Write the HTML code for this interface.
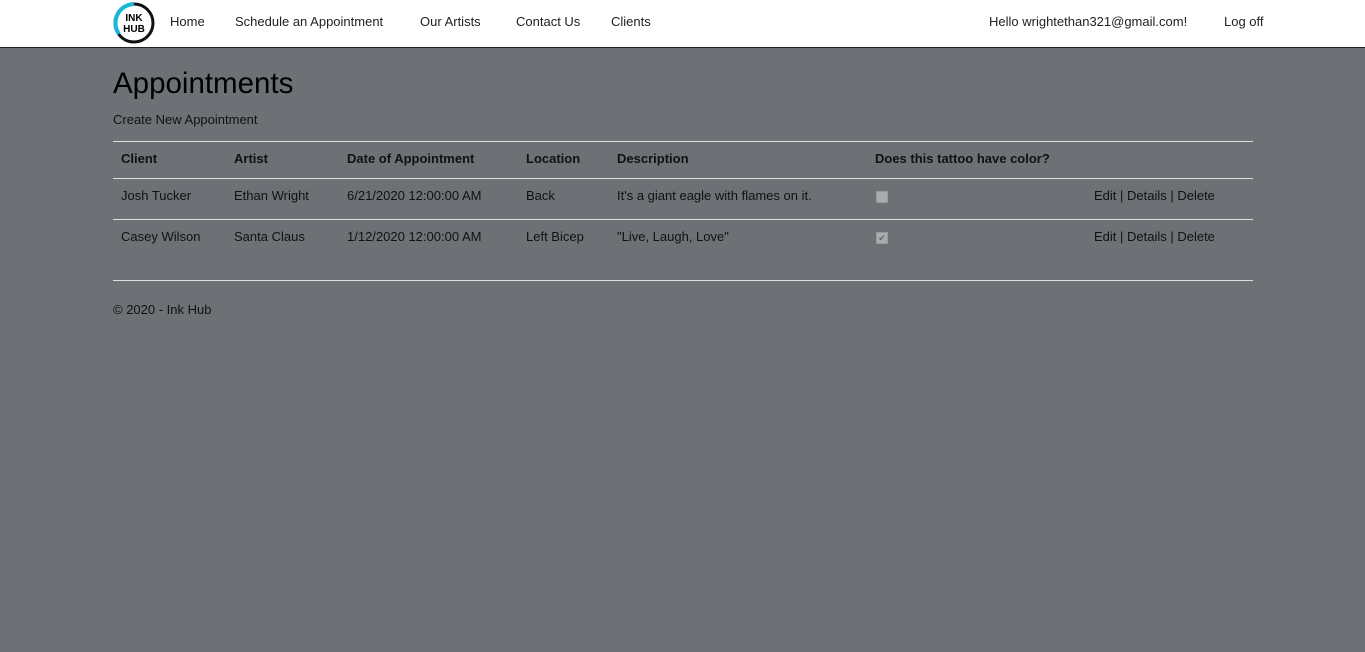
<!DOCTYPE html>
<html><head><meta charset="utf-8"><style>
body{margin:0;background:#6d7075;font-family:"Liberation Sans",sans-serif;font-size:13px;color:#111;width:1365px;height:652px;overflow:hidden}
.nav{position:absolute;top:0;left:0;width:1365px;height:47px;background:#fff;border-bottom:1px solid #222}
.nav span{position:absolute;top:14px;font-size:13px;color:#222}
.logo{position:absolute;left:113px;top:2px;width:42px;height:42px}
h1{position:absolute;left:113px;top:67px;margin:0;font-weight:normal;font-size:29.5px;color:#000}
.t{position:absolute;font-size:13px;white-space:nowrap}
.line{position:absolute;left:113px;width:1140px;height:1px;background:#ddd}
.b{font-weight:bold}
.cb{position:absolute;width:10px;height:10px;background:#a9abae;border:1px solid #999;left:876px}
</style></head><body>
<div class="nav">
<svg class="logo" viewBox="0 0 42 42"><circle cx="21" cy="21" r="19" fill="#fff" stroke="#111" stroke-width="3"/><path d="M6 32 A19 19 0 0 1 21 2" stroke="#17b8d6" stroke-width="4" fill="none"/><text x="21" y="19" font-size="10" font-weight="bold" text-anchor="middle" font-family="Liberation Sans">INK</text><text x="21" y="30" font-size="10" font-weight="bold" text-anchor="middle" font-family="Liberation Sans">HUB</text></svg>
<span style="left:170px">Home</span>
<span style="left:235px">Schedule an Appointment</span>
<span style="left:420px">Our Artists</span>
<span style="left:516px">Contact Us</span>
<span style="left:611px">Clients</span>
<span style="left:989px">Hello wrightethan321@gmail.com!</span>
<span style="left:1224px">Log off</span>
</div>
<h1>Appointments</h1>
<div class="t" style="left:113px;top:112px">Create New Appointment</div>
<div class="line" style="top:141px"></div>
<div class="t b" style="left:121px;top:151px">Client</div>
<div class="t b" style="left:234px;top:151px">Artist</div>
<div class="t b" style="left:347px;top:151px">Date of Appointment</div>
<div class="t b" style="left:526px;top:151px">Location</div>
<div class="t b" style="left:617px;top:151px">Description</div>
<div class="t b" style="left:875px;top:151px">Does this tattoo have color?</div>
<div class="line" style="top:178px"></div>
<div class="t" style="left:121px;top:188px">Josh Tucker</div>
<div class="t" style="left:234px;top:188px">Ethan Wright</div>
<div class="t" style="left:347px;top:188px">6/21/2020 12:00:00 AM</div>
<div class="t" style="left:526px;top:188px">Back</div>
<div class="t" style="left:617px;top:188px">It's a giant eagle with flames on it.</div>
<div class="cb" style="top:191px"></div>
<div class="t" style="left:1094px;top:188px">Edit | Details | Delete</div>
<div class="line" style="top:219px"></div>
<div class="t" style="left:121px;top:229px">Casey Wilson</div>
<div class="t" style="left:234px;top:229px">Santa Claus</div>
<div class="t" style="left:347px;top:229px">1/12/2020 12:00:00 AM</div>
<div class="t" style="left:526px;top:229px">Left Bicep</div>
<div class="t" style="left:617px;top:229px">"Live, Laugh, Love"</div>
<div class="cb" style="top:232px;font-size:9px;line-height:10px;text-align:center;color:#666">✔</div>
<div class="t" style="left:1094px;top:229px">Edit | Details | Delete</div>
<div class="line" style="top:280px"></div>
<div class="t" style="left:113px;top:302px">© 2020 - Ink Hub</div>
</body></html>
